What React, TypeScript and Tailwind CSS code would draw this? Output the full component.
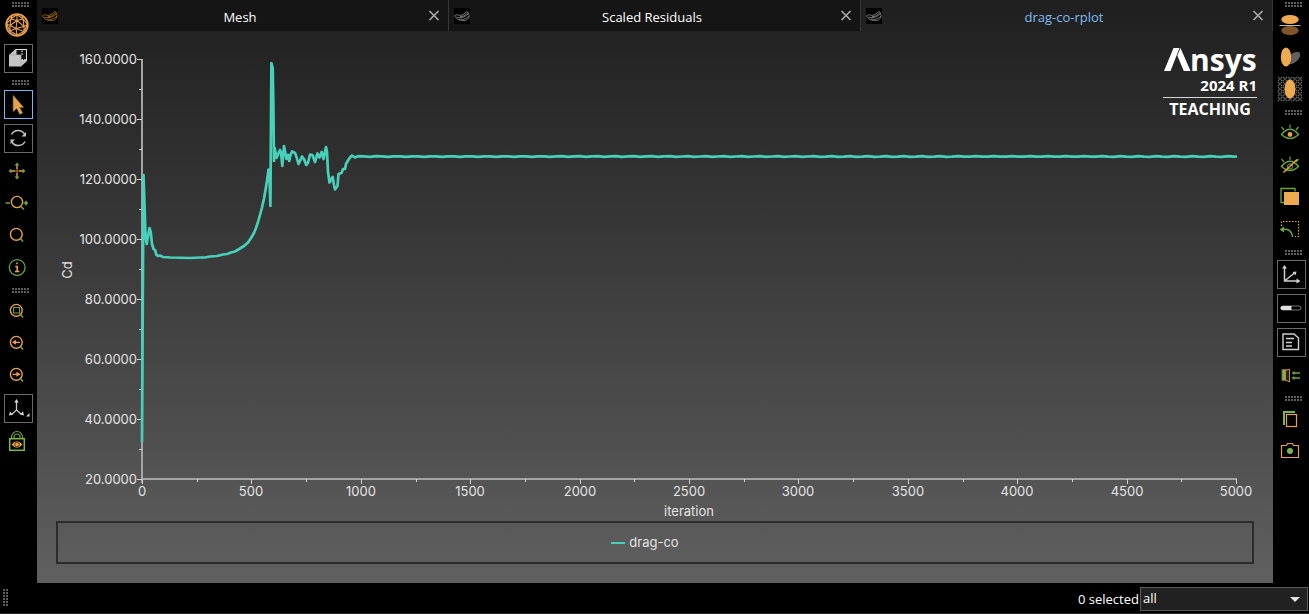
import React from "react";

const ORANGE = "#e9a04b";
const GREEN = "#6aa63c";

function Grip({ cols, rows }: { cols: number; rows: number }) {
  const dots: React.ReactNode[] = [];
  for (let r = 0; r < rows; r++)
    for (let c = 0; c < cols; c++)
      dots.push(<rect key={`${r}-${c}`} x={c * 3} y={r * 3} width="2" height="2" fill="#5e5e5e" />);
  return (
    <svg width={cols * 3 - 1} height={rows * 3 - 1} aria-hidden="true" className="block">
      {dots}
    </svg>
  );
}

function BarGrip() {
  return (
    <div className="h-3 shrink-0 pt-[5px] pl-3">
      <Grip cols={6} rows={2} />
    </div>
  );
}

type ToolProps = { label: string; boxed?: boolean; active?: boolean; children: React.ReactNode };

function Tool({ label, boxed, active, children }: ToolProps) {
  const frame = boxed
    ? active
      ? "mt-[3px] mb-0.5 ml-1 h-[29px] w-[29px] items-start justify-start border border-[#7db4f0]"
      : "mt-[3px] mb-0.5 ml-1 h-[29px] w-[29px] items-start justify-start border border-[#6a6a6a]"
    : "h-8 w-[34px] items-center justify-center";
  return (
    <button type="button" aria-label={label} className={`flex shrink-0 ${frame}`}>
      <svg width="26" height="26" viewBox="0 0 26 26" fill="none" className="block shrink-0" aria-hidden="true">
        {children}
      </svg>
    </button>
  );
}

function Lens({ children }: { children?: React.ReactNode }) {
  return (
    <>
      <circle cx="12.3" cy="12.3" r="5.9" stroke={ORANGE} strokeWidth="1.4" />
      <path d="M16.500 16.500 19 19.500" stroke={GREEN} strokeWidth="1.6" />
      {children}
    </>
  );
}

function LeftBar() {
  return (
    <nav aria-label="View tools" className="flex w-[37px] shrink-0 flex-col bg-black">
      <div className="-mt-[3px]">
        <BarGrip />
      </div>
      <Tool label="Mesh display">
        <g stroke={ORANGE} strokeWidth="1.1">
          <circle cx="13" cy="13" r="10.8" strokeWidth="1.8" />
          <path d="M13 2.5 7 7l-4.500 5L6 19l7 4 7-3.500 3.500-7L19 7zM7 7l6 1.500L19 7M7 7l-1 6.500L13 8.500l7 6L19 7M6 13.500l-3.500-1.500M6 13.500 6 19l6-2.500-6-3M12 16.500l8-2 0 5-8-3 1 6.500M12 16.500 13 8.500V2.500M20 14.500l3.500-2M8 3.500 7 7M18 3.500 19 7" />
        </g>
      </Tool>
      <Tool label="Box display" boxed>
        <path d="M4 10 10.500 4H22v12l-6 5.500H4z" fill="#c6c6c6" />
        <path d="M10.500 4H22v12L16 10z" fill="#dedede" />
        <path d="M11.500 5h9.500v10h-5V10h-4.500z" fill="#101010" />
        <path d="M11.500 10.500h5M17 5.500v5M16.500 14.500h4.500" stroke="#e8e8e8" strokeWidth="1.200" strokeDasharray="1.500 1.200" />
        <path d="M4 10h12v11.500" stroke="#a4a4a4" strokeWidth="0.8" />
      </Tool>
      <BarGrip />
      <Tool label="Select" boxed active>
        <path d="M8.200 4.500v16l3.600-3.200 3 6 2.700-1.400-3-5.600h4z" fill={ORANGE} stroke="#a59a44" strokeWidth="0.6" />
      </Tool>
      <Tool label="Rotate" boxed>
        <g stroke="#c4c4c4" strokeWidth="1.500">
          <path d="M6.500 9.500a7.500 7.500 0 0 1 13-.5M20 16.500a7.500 7.500 0 0 1-13 .5" />
          <path d="M21 7v4.500h-4.500zM5.500 19v-4.500h4.500z" fill="#c4c4c4" stroke="none" />
        </g>
      </Tool>
      <Tool label="Pan">
        <path d="M13 7v4M13 15v4M7 13h4M15 13h4" stroke={ORANGE} strokeWidth="1.4" />
        <path d="M13 4.500l2.500 3h-5zM13 21.500l2.500-3h-5zM4.500 13l3-2.500v5zM21.500 13l-3-2.500v5z" fill={GREEN} />
        <circle cx="13" cy="13" r="1.200" stroke={ORANGE} strokeWidth="0.8" />
      </Tool>
      <Tool label="Zoom in and out">
        <circle cx="13" cy="12" r="5.600" stroke={ORANGE} strokeWidth="1.4" />
        <path d="M17 16.500l3 3M1.500 13h4.500M19.500 13h4.500M22 10.800v4.400" stroke={GREEN} strokeWidth="1.6" />
      </Tool>
      <Tool label="Zoom">
        <Lens />
      </Tool>
      <Tool label="Information">
        <circle cx="13.200" cy="13.500" r="7.900" stroke={GREEN} strokeWidth="1.300" />
        <path d="M13 8.500v1.800M11.300 12.500h1.900v5M11 17.500h4.400" stroke={ORANGE} strokeWidth="1.600" />
      </Tool>
      <BarGrip />
      <Tool label="Zoom to box">
        <Lens>
          <rect x="9.500" y="9.500" width="6" height="5.500" stroke={GREEN} />
        </Lens>
      </Tool>
      <Tool label="Previous view">
        <Lens>
          <path d="M9.500 12.300h6.500M11.500 10.800 9 12.300l2.500 1.500z" stroke={ORANGE} strokeWidth="1.200" />
        </Lens>
      </Tool>
      <Tool label="Next view">
        <Lens>
          <path d="M8.500 12.300h6.500M13 10.800l2.500 1.500-2.500 1.500z" stroke={ORANGE} strokeWidth="1.200" />
        </Lens>
      </Tool>
      <Tool label="Orient axes" boxed>
        <path d="M11.500 6v9l-5 4.500M11.500 15l5 4.500" stroke="#c8c8c8" strokeWidth="1.300" />
        <path d="M11.500 4l2.200 3.500H9.300zM4 20.500 5 16.500l3 3.300zM19 20.500l-4-1 3-3.200zM24.500 18v3.500H21z" fill="#d6d6d6" />
      </Tool>
      <Tool label="Lock view">
        <path d="M7.500 10.500V9a5.500 5.500 0 0 1 11 0v1.500M10 10.500V9a3 3 0 0 1 6 0v1.500" stroke={GREEN} strokeWidth="1.200" />
        <rect x="5.700" y="10.700" width="14.600" height="11.600" stroke="#7cba45" strokeWidth="1.500" />
        <path d="M7.500 16.500q5.500-6.500 11 0q-5.500 6.500-11 0z" fill={ORANGE} />
        <circle cx="13" cy="16.500" r="2.300" fill={ORANGE} stroke="#3d2a10" strokeWidth="0.9" />
      </Tool>
    </nav>
  );
}

function RightBar() {
  return (
    <nav aria-label="Display tools" className="flex w-9 shrink-0 flex-col bg-black">
      <div className="-mt-[3px]">
        <BarGrip />
      </div>
      <Tool label="Mirror">
        <ellipse cx="13" cy="7.500" rx="8.700" ry="4.500" fill="#efa94f" />
        <ellipse cx="13" cy="18.500" rx="8.700" ry="4.500" fill="#805627" />
        <path d="M2.500 13.500h21" stroke="#b9b9b9" />
      </Tool>
      <Tool label="Shadow">
        <ellipse cx="16.500" cy="14" rx="8" ry="4.500" transform="rotate(-40 16.500 14)" fill="#606060" />
        <ellipse cx="9" cy="13" rx="5.200" ry="9.500" fill="#efa94f" />
      </Tool>
      <Tool label="Transparency">
        <path
          d="M1 5l4-4M1 10l9-9M1 15 15 1M1 20 20 1M1 25 25 1M6 25 25 6M11 25 25 11M16 25l9-9M21 25l4-4M1 21l4 4M1 16l9 9M1 11l14 14M1 6l19 19M1 1l24 24M6 1l19 19M11 1l14 14M16 1l9 9M21 1l4 4"
          stroke="#626262"
          strokeWidth="1.100"
          strokeDasharray="2.500 1"
        />
        <ellipse cx="13" cy="13" rx="5.400" ry="9.400" fill="#efa94f" />
      </Tool>
      <BarGrip />
      <Tool label="Show">
        <path d="M4.500 14.500q8.500-10.500 17 0q-8.500 8-17 0z" stroke={GREEN} strokeWidth="1.500" />
        <path d="M13 4.500v3.500M4.500 7l2.500 3M21.500 7 19 10" stroke={GREEN} strokeWidth="1.200" />
        <circle cx="13" cy="14.500" r="2.400" fill={ORANGE} />
      </Tool>
      <Tool label="Hide">
        <path d="M4.500 14.500q8.500-10.500 17 0q-8.500 8-17 0z" stroke={GREEN} strokeWidth="1.500" />
        <path d="M13 4.500v3.500M4.500 7l2.500 3M21.500 7 19 10" stroke={GREEN} strokeWidth="1.200" />
        <circle cx="13" cy="14.500" r="2.600" stroke={GREEN} />
        <path d="M6.500 20.500 20 7.500" stroke={ORANGE} strokeWidth="1.600" />
      </Tool>
      <Tool label="Bring forward">
        <path d="M7 18.500H4V4.500h14v3" stroke={GREEN} strokeWidth="1.300" />
        <rect x="7" y="8" width="15" height="13" fill="#efa94f" />
      </Tool>
      <Tool label="Undo selection">
        <path d="M4.500 10V5.500h17v15H18" stroke={ORANGE} strokeWidth="1.200" strokeDasharray="1.500 1.500" />
        <path d="M5.500 13.500q9-1.500 10 7.500" stroke={GREEN} strokeWidth="1.500" />
        <path d="M2.500 13.500l4.500-3v6z" fill={GREEN} />
      </Tool>
      <BarGrip />
      <Tool label="Axes" boxed>
        <path d="M6.500 6.500v13.500h13M6.500 20 16.500 12" stroke="#cfcfcf" strokeWidth="1.500" />
        <path d="M6.500 4 9 7.500H4zM22.500 20l-4-2.500v5zM18.500 10.500l-1 4-3-3.500z" fill="#cfcfcf" />
      </Tool>
      <Tool label="Ruler" boxed>
        <rect x="3" y="11" width="20" height="4" rx="2" stroke="#777" />
        <path d="M4.500 11h9v4h-9a2 2 0 0 1 0-4z" fill="#e0e0e0" />
      </Tool>
      <Tool label="Title block" boxed>
        <path d="M5 5h11l4.500 4v11.500H5z" stroke="#d0d0d0" strokeWidth="1.400" />
        <path d="M8 9.500h8M8 13.500h6M8 17h6" stroke="#d0d0d0" strokeWidth="1.400" />
      </Tool>
      <Tool label="Exit view">
        <path d="M5 7.500h7v11H5z" fill="#78b64a" stroke="#80663a" />
        <path d="M8.500 8.500 12.500 7v13l-4-2z" fill="#2b2413" stroke="#c08a46" />
        <path d="M16 11h7M16 16h7" stroke={GREEN} strokeWidth="1.500" />
        <path d="M14.500 11l3-2v4zM14.500 16l3-2v4z" fill={GREEN} />
      </Tool>
      <BarGrip />
      <Tool label="Copy">
        <path d="M7 19V6H18" stroke="#78b64a" strokeWidth="2" />
        <rect x="9.500" y="8.500" width="10" height="12" stroke={ORANGE} strokeWidth="1.200" />
      </Tool>
      <Tool label="Save picture">
        <path d="M4.500 7.500h5l1-2h5l1 2h5v12h-17z" stroke={ORANGE} strokeWidth="1.200" />
        <circle cx="13" cy="13" r="3" fill="#78b64a" />
      </Tool>
    </nav>
  );
}

function WaveIcon({ gold }: { gold?: boolean }) {
  return (
    <svg width="16" height="16" viewBox="0 0 16 16" fill="none" aria-hidden="true" className="shrink-0 bg-black">
      <g stroke={gold ? "#b57a12" : "#939393"} strokeWidth="0.8">
        <path d="M.5 7.500C4 5.500 5 8.500 8 7s3.500-2.500 5-3.500M.5 8c2.500 3.500 4 4 8 4.500s7-2 6.500-5-1-3.500-2-4" />
        <path d="M2.500 9c4 1.500 8 .5 12-3.500M5 11c4 1 7.500-.2 10-3M6 8.500c3 .5 5.500-1.300 8-4" />
      </g>
    </svg>
  );
}

const tabs = [
  { name: "Mesh", gold: true, active: false },
  { name: "Scaled Residuals", gold: false, active: false },
  { name: "drag-co-rplot", gold: false, active: true },
];

function Tabs() {
  return (
    <div role="tablist" className="grid h-[31px] shrink-0 grid-cols-3 font-['Open_Sans','Noto_Sans',sans-serif] text-[13px]">
      {tabs.map((t) => (
        <div
          key={t.name}
          className={`flex items-center border-r border-[#363636] pr-0.5 pl-[5px] ${t.active ? "text-[#7fbdf0]" : "bg-[#151515] text-white"}`}
        >
          <WaveIcon gold={t.gold} />
          <button type="button" role="tab" aria-selected={t.active} className="h-full flex-1 pt-1 text-center">
            {t.name}
          </button>
          <button type="button" aria-label={`Close ${t.name}`} className="flex h-full w-6 items-center justify-center">
            <svg width="12" height="12" viewBox="0 0 12 12" aria-hidden="true">
              <path d="M1.500 1l9 9M10.500 1l-9 9" stroke="#a8a8a8" strokeWidth="1.700" />
            </svg>
          </button>
        </div>
      ))}
    </div>
  );
}

function Logo() {
  return (
    <svg
      role="img"
      aria-label="Ansys 2024 R1 Teaching"
      width="100"
      height="92"
      viewBox="0 -12 100 92"
      fill="#fff"
      className="absolute top-8 right-[11px] font-['Open_Sans',sans-serif] font-bold"
    >
      <path d="M2 27 11.500 4H17.500L8.500 27zM18.500 4 28.500 27H21.800L15.300 11.500z" />
      <text x="28" y="27" fontSize="30">nsys</text>
      <text x="95" y="47" fontSize="15" textAnchor="end">2024 R1</text>
      <path d="M1 53.500h94" stroke="#d8d8d8" />
      <text x="48" y="71" fontSize="16" textAnchor="middle">TEACHING</text>
    </svg>
  );
}

const LEFT = 142;
const BASE = 479;
const history =
  "142,442 143.500,175 144.500,205 145.500,236 146.700,244 148,236 149.500,228 150.700,232 152,244 153.500,249 155,250 156.500,255 158,256 160,255.500 163,257 170,257.500 190,258 200,257.500 205,257.500 210,256.500 217,256 223,254.500 227,254 231,252.500 235,251.500 240,248.500 244,246 248,242.500 251,238 254,233 256,228 258,222 260,215 262,207.500 264,198.500 265.500,190 267,181 268.500,169.500 269.500,176 270.400,206 271.400,63 272.700,68 273.300,100 274,161 274.700,148 276.500,158 278,154.500 280,150 281,152 282.300,166 284,146 286.500,159 288,155 289.200,161 290.500,155 292,151.500 295,153 296.500,157 298.500,164 300,161 302,156.500 304,159 306.300,165 308,163 310,154.500 312.500,155 315,162 317.500,153.500 319.500,157.500 321.700,152 323.500,159 326,147 327,152 328,172 329.500,182.500 331,180 332.700,177 334,185 335,189.500 337.500,186 338.500,174 341.500,173 343,169 345,169 346,164 348,160.500 350,157.500 352,155.500 355,157.500";

function steady() {
  const pts: string[] = [];
  for (let x = 358; x <= 1237; x += 6) pts.push(`${x},${(156.5 + 0.4 * Math.sin(x * 0.7)).toFixed(1)}`);
  pts.push("1237,156.5");
  return pts.join(" ");
}

function Plot() {
  const yTicks = Array.from({ length: 15 }, (_, i) => i);
  const xTicks = Array.from({ length: 21 }, (_, i) => i);
  return (
    <svg
      viewBox="37 31 1236 490"
      role="img"
      aria-label="Drag coefficient by iteration"
      className="block min-h-0 w-full flex-1 font-[Inter,sans-serif]"
      fill="#e4e4e4"
      fontSize="13"
    >
      <g stroke="#a4a4a4" strokeWidth="2">
        <path d="M142 59V483M142 479H1237" />
      </g>
      <g stroke="#d0d0d0" strokeWidth="1">
        {yTicks.map((i) => (
          <path key={i} d={`M${i % 2 ? 139 : 137} ${BASE - i * 30 + 0.5}H142`} />
        ))}
        {xTicks.map((i) => (
          <path key={i} d={`M${Math.round(LEFT + i * 54.7) + 0.5} 479V${i % 2 ? 482 : 484}`} />
        ))}
      </g>
      {yTicks
        .filter((i) => i % 2 === 0)
        .map((i) => (
          <text key={i} x="137" y={BASE - i * 30 + 5} textAnchor="end">
            {(20 + i * 10).toFixed(4)}
          </text>
        ))}
      {xTicks
        .filter((i) => i % 2 === 0)
        .map((i) => (
          <text key={i} x={Math.round(LEFT + i * 54.7)} y="496" textAnchor="middle">
            {i * 250}
          </text>
        ))}
      <text x="689" y="516" textAnchor="middle">iteration</text>
      <text transform="translate(72 270) rotate(-90)" textAnchor="middle">Cd</text>
      <polyline points={`${history} ${steady()}`} fill="none" stroke="#47d1bb" strokeWidth="2.700" strokeLinejoin="round" />
    </svg>
  );
}

export default function App() {
  return (
    <div className="flex h-screen flex-col bg-black font-['Open_Sans','Noto_Sans',sans-serif] text-white">
      <div className="flex min-h-0 flex-1">
        <LeftBar />
        <main className="relative flex min-w-0 flex-1 flex-col bg-linear-to-b from-[#1f1f1f] to-[#606060]">
          <Tabs />
          <Plot />
          <div className="mx-[19px] mb-[19px] flex h-[43px] shrink-0 items-center justify-center gap-1 border-2 border-[#2c2c2c] pr-5 font-[Inter,sans-serif] text-[13px] text-[#e4e4e4]">
            <span className="h-0.5 w-3.5 bg-[#47d1bb]" />
            drag-co
          </div>
          <Logo />
        </main>
        <RightBar />
      </div>
      <footer className="flex h-[31px] shrink-0 items-start border-b border-[#242424] pt-1 pl-[3px] text-[13px]">
        <div className="pt-0.5">
          <Grip cols={2} rows={6} />
        </div>
        <label htmlFor="filter" className="ml-auto pr-px leading-6">
          0 selected
        </label>
        <div className="relative mr-px">
          <select
            id="filter"
            defaultValue="all"
            className="block h-6 w-[168px] appearance-none border border-[#5a5a5a] bg-[#212121] pl-0.5 text-[13px] text-white"
          >
            <option value="all">all</option>
          </select>
          <svg width="10" height="5" className="pointer-events-none absolute top-2.5 right-2" aria-hidden="true">
            <path d="M0 0h10L5 5z" fill="#e4e4e4" />
          </svg>
        </div>
      </footer>
    </div>
  );
}
